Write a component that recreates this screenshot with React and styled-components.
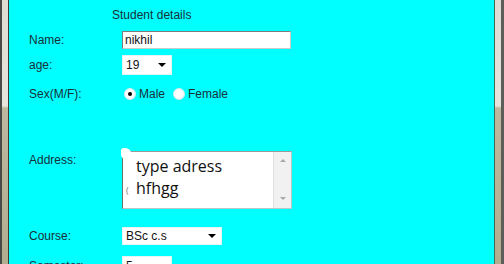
import React from "react";
import styled, { createGlobalStyle } from "styled-components";

const Global = createGlobalStyle`
  html, body { margin: 0; padding: 0; background: #00ffff; overflow: hidden; }
  body { font-family: "Liberation Sans", Arial, sans-serif; }
  #root { width: 504px; height: 264px; }
`;

const Window = styled.div`
  display: flex;
  width: 504px;
  height: 264px;
  overflow: hidden;
`;

const Edge = styled.div`
  flex: none;
  width: ${(p) => p.$w}px;
  box-sizing: border-box;
  border-left: ${(p) => p.$bl};
  border-right: ${(p) => p.$br};
  background: linear-gradient(to bottom, #dedbd2 0, #e6e4dc 106px, #bdb89e 108px, #b3ad90 100%);
`;

const Panel = styled.div`
  flex: 1;
  background: #00ffff;
  padding-left: 20px;
  display: flex;
  flex-direction: column;
  color: #18303a;
  font-size: 12px;
`;

const Title = styled.div`
  margin-top: 8px;
  padding-left: 83px;
  height: 14px;
  line-height: 14px;
`;

const Row = styled.div`
  display: grid;
  grid-template-columns: 93px auto;
  align-items: ${(p) => (p.$top ? "start" : "center")};
  margin-top: ${(p) => p.$mt}px;
  height: ${(p) => p.$h}px;
  flex: none;
`;

const Label = styled.span`
  line-height: 14px;
  padding-top: ${(p) => p.$pt || 0}px;
`;

const TextField = styled.div`
  box-sizing: border-box;
  width: 169px;
  height: 18px;
  background: #fff;
  border: 1px solid #c9c9c9;
  border-top-color: #7c7c7c;
  border-left-color: #7c7c7c;
  padding-left: 2px;
  line-height: 16px;
  color: #111;
`;

const Combo = styled.div`
  box-sizing: border-box;
  width: ${(p) => p.$w}px;
  height: ${(p) => p.$h}px;
  background: #fff;
  border: 1px solid #e4f4f4;
  display: flex;
  align-items: center;
  color: #111;
`;

const ComboText = styled.span`
  flex: 1;
  padding-left: 3px;
`;

const Arrow = styled.span`
  flex: none;
  width: 0;
  height: 0;
  margin-right: 5px;
  border-left: 4px solid transparent;
  border-right: 4px solid transparent;
  border-top: 4px solid #000;
`;

const RadioGroup = styled.div`
  display: flex;
  align-items: center;
  padding-left: 2px;
  gap: 8px;
`;

const RadioItem = styled.label`
  display: flex;
  align-items: center;
  gap: 3px;
`;

const RadioDot = styled.span`
  box-sizing: border-box;
  width: 12px;
  height: 12px;
  border-radius: 50%;
  background: radial-gradient(circle at 40% 40%, #ffffff 55%, #e6e6e6 100%);
  border: 1px solid #d9eded;
  display: flex;
  align-items: center;
  justify-content: center;
  &::after {
    content: "";
    width: 4px;
    height: 4px;
    border-radius: 50%;
    background: ${(p) => (p.$on ? "#000" : "transparent")};
  }
`;

const AreaWrap = styled.div`
  position: relative;
  width: 170px;
  height: 58px;
`;

const TextArea = styled.div`
  box-sizing: border-box;
  width: 170px;
  height: 58px;
  background: #fff;
  border: 1px solid #b8c8c8;
  border-left-color: #6f6f6f;
  border-top-color: #9a9a9a;
  display: flex;
`;

const AreaText = styled.div`
  flex: 1;
  padding: 3px 0 0 13px;
  font-family: "Open Sans", "Liberation Sans", sans-serif;
  font-size: 16px;
  font-weight: 500;
  line-height: 22px;
  color: #111;
`;

const ScrollBar = styled.div`
  flex: none;
  width: 17px;
  background: #f1f1f1;
  border-left: 1px solid #e2e2e2;
  display: flex;
  flex-direction: column;
  justify-content: space-between;
  align-items: center;
  padding: 7px 0 8px;
`;

const ScrollArrow = styled.span`
  width: 0;
  height: 0;
  border-left: 3px solid transparent;
  border-right: 3px solid transparent;
  ${(p) =>
    p.$up
      ? "border-bottom: 3px solid #a8a8a8;"
      : "border-top: 3px solid #a8a8a8;"}
`;

const Blob = styled.span`
  position: absolute;
  left: -1px;
  top: -3px;
  width: 10px;
  height: 11px;
  border-radius: 3px 6px 6px 5px;
  background: #fff;
`;

const Stray = styled.span`
  position: absolute;
  left: 4px;
  top: 33px;
  font-size: 9px;
  color: #777;
  font-family: "Open Sans", sans-serif;
`;

export default function App() {
  return (
    <>
      <Global />
      <Window>
        <Edge $w={9} $bl="2px solid #4a4a48" $br="1px solid #3c3c3a" />
        <Panel>
          <Title>Student details</Title>
          <Row $mt={9} $h={18}>
            <Label>Name:</Label>
            <TextField>nikhil</TextField>
          </Row>
          <Row $mt={6} $h={20}>
            <Label>age:</Label>
            <Combo $w={50} $h={20}>
              <ComboText>19</ComboText>
              <Arrow />
            </Combo>
          </Row>
          <Row $mt={10} $h={18}>
            <Label>Sex(M/F):</Label>
            <RadioGroup>
              <RadioItem>
                <RadioDot $on />
                Male
              </RadioItem>
              <RadioItem>
                <RadioDot />
                Female
              </RadioItem>
            </RadioGroup>
          </Row>
          <Row $mt={48} $h={58} $top>
            <Label $pt={2}>Address:</Label>
            <AreaWrap>
              <TextArea>
                <AreaText>
                  type adress
                  <br />
                  hfhgg
                </AreaText>
                <ScrollBar>
                  <ScrollArrow $up />
                  <ScrollArrow />
                </ScrollBar>
              </TextArea>
              <Blob />
              <Stray>(</Stray>
            </AreaWrap>
          </Row>
          <Row $mt={18} $h={18}>
            <Label>Course:</Label>
            <Combo $w={100} $h={18}>
              <ComboText>BSc c.s</ComboText>
              <Arrow />
            </Combo>
          </Row>
          <Row $mt={11} $h={20}>
            <Label>Semester:</Label>
            <Combo $w={50} $h={20}>
              <ComboText>5</ComboText>
              <Arrow />
            </Combo>
          </Row>
        </Panel>
        <Edge $w={10} $bl="1px solid #3f6a58" $br="3px solid #5d5d5a" />
      </Window>
    </>
  );
}
